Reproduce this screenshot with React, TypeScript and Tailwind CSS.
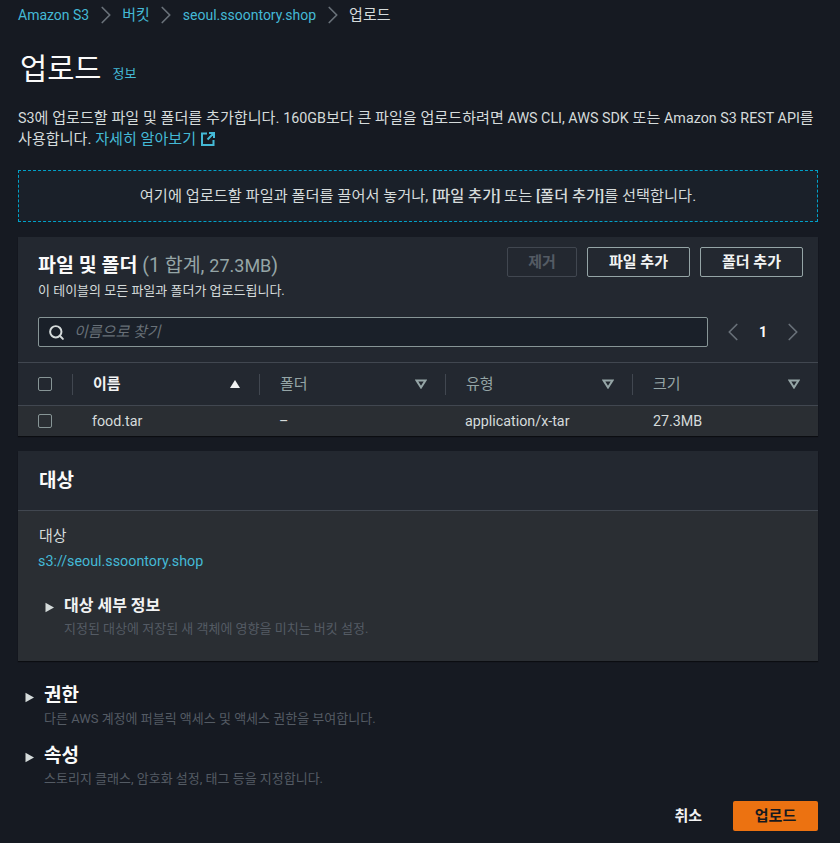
import type { ReactNode } from "react";
import { Search, ChevronLeft, ChevronRight } from "lucide-react";

// hangul runs a bit larger than latin in the shot, so latin runs get their own size
function En({ children }: { children: ReactNode }) {
  return <span className="text-[14.3px]">{children}</span>;
}

function Caret({ active }: { active?: boolean }) {
  if (active) {
    return (
      <svg width="12" height="10" viewBox="0 0 12 10">
        <path d="M6 1 L11 9 L1 9 Z" fill="#f2f3f3" />
      </svg>
    );
  }
  return (
    <svg width="12" height="10" viewBox="0 0 12 10">
      <path d="M1.5 1.5 L10.5 1.5 L6 8.5 Z" fill="none" stroke="#95a5a6" strokeWidth="2" />
    </svg>
  );
}

function Expand() {
  return (
    <svg width="10" height="11" viewBox="0 0 10 11" className="shrink-0 mt-[2px]">
      <path d="M0.5 0.8 L9 5.5 L0.5 10.2 Z" fill="#d5dbdb" />
    </svg>
  );
}

function Crumb() {
  return <ChevronRight size={30} strokeWidth={1.4} className="mx-[1.5px] text-[#687078]" />;
}

function Checkbox() {
  return <div className="w-[14px] h-[14px] rounded-[2px] border border-[#879596]" />;
}

function HeaderCell({ label, width, active }: { label: string; width: string; active?: boolean }) {
  return (
    <div className={`${width} flex items-center h-[21px] border-l border-[#414750] pl-5 pr-[18px]`}>
      <span className={active ? "font-bold text-[#f2f3f3]" : "text-[#95a5a6]"}>{label}</span>
      <span className="ml-auto flex"><Caret active={active} /></span>
    </div>
  );
}

export default function App() {
  const font = { fontFamily: 'Roboto, "Noto Sans CJK KR", sans-serif' };
  return (
    <div style={font} className="w-[840px] h-[843px] overflow-hidden bg-[#161a22] text-[15px] leading-[20px] text-[#d5dbdb] pl-[18px] pr-[22px]">
      <nav className="flex items-center h-[29px] text-[#44b9d6]">
        <span className="text-[14px]">Amazon S3</span>
        <Crumb />
        <span>버킷</span>
        <Crumb />
        <span className="text-[14px]">seoul.ssoontory.shop</span>
        <Crumb />
        <span className="text-[#d5dbdb]">업로드</span>
      </nav>

      <div className="flex items-end mt-[21px] ml-[2px] h-[38px]">
        <h1 className="text-[29.5px] leading-[38px] text-[#fafafa]">업로드</h1>
        <span className="ml-[11px] mb-[6px] text-[13px] leading-[16px] text-[#44b9d6]">정보</span>
      </div>

      <p className="mt-[20px] leading-[21px] whitespace-nowrap text-[15.1px]">
        <En>S3</En>에 업로드할 파일 및 폴더를 추가합니다. <En>160GB</En>보다 큰 파일을 업로드하려면 <En>AWS CLI, AWS SDK</En> 또는 <En>Amazon S3 REST API</En>를
        <br />
        사용합니다. <span className="text-[#44b9d6]">자세히 알아보기</span>
        <svg width="14" height="14" viewBox="0 0 14 14" className="inline-block ml-[5px] align-[-2px]">
          <path d="M6 1.5 H1 V13 H12.5 V8 M8 1 H13 V6 M13 1 L6.5 7.5" fill="none" stroke="#44b9d6" strokeWidth="2" />
        </svg>
      </p>

      <div className="mt-[20px] h-[52px] flex items-center justify-center border border-dashed border-[#00a1c9] bg-[#1a2029] text-[15.25px]">
        <span>
          여기에 업로드할 파일과 폴더를 끌어서 놓거나, <span className="font-medium">[파일 추가]</span> 또는{" "}
          <span className="font-medium">[폴더 추가]</span>를 선택합니다.
        </span>
      </div>

      <section className="mt-[15px] bg-[#232830] shadow-[0_1px_1px_rgba(0,0,0,0.5)]">
        <div className="h-[126px] pl-5 pr-[15px] pt-[10px] border-b border-[#414750]">
          <div className="flex items-start justify-between">
            <div className="pt-[6px]">
              <h2 className="text-[19.5px] leading-[26px] font-bold text-[#fafafa]">
                파일 및 폴더 <span className="font-normal text-[#95a5a6]">(1 합계, <span className="text-[18px]">27.3MB</span>)</span>
              </h2>
              <p className="text-[13px] leading-[16px] mt-[4px]">이 테이블의 모든 파일과 폴더가 업로드됩니다.</p>
            </div>
            <div className="flex gap-[10px]">
              <button className="w-[70px] h-[30px] rounded-[2px] border border-[#414750] text-[#545b64] font-bold">제거</button>
              <button className="w-[103px] h-[30px] rounded-[2px] border border-[#95a5a6] text-[#f2f3f3] font-bold">파일 추가</button>
              <button className="w-[103px] h-[30px] rounded-[2px] border border-[#95a5a6] text-[#f2f3f3] font-bold">폴더 추가</button>
            </div>
          </div>
          <div className="flex items-center mt-[18px]">
            <div className="w-[670px] h-[30px] shrink-0 flex items-center rounded-[2px] border border-[#879596] bg-[#1a2029] pl-[9px]">
              <Search size={17} strokeWidth={2.8} className="text-[#d5dbdb]" />
              <span className="ml-[9px] italic text-[#687078]">이름으로 찾기</span>
            </div>
            <div className="flex items-center ml-[10px] shrink-0">
              <ChevronLeft size={30} strokeWidth={1.4} className="text-[#687078]" />
              <span className="w-[30px] text-center text-[14px] font-bold text-[#fafafa]">1</span>
              <ChevronRight size={30} strokeWidth={1.4} className="text-[#687078]" />
            </div>
          </div>
        </div>

        <div className="h-[43px] flex items-center pl-5 border-b border-[#414750]">
          <div className="w-[34px]"><Checkbox /></div>
          <HeaderCell label="이름" width="w-[187px]" active />
          <HeaderCell label="폴더" width="w-[186px]" />
          <HeaderCell label="유형" width="w-[187px]" />
          <HeaderCell label="크기" width="w-[186px]" />
        </div>

        <div className="h-[30px] flex items-center pl-5 bg-[#2a2e33] text-[14.3px]">
          <div className="w-[54px]"><Checkbox /></div>
          <span className="w-[187px]">food.tar</span>
          <span className="w-[186px]">–</span>
          <span className="w-[188px]">application/x-tar</span>
          <span>27.3MB</span>
        </div>
      </section>

      <section className="mt-[15px] shadow-[0_1px_1px_rgba(0,0,0,0.5)]">
        <div className="h-[60px] flex items-center pl-[21px] pr-5 bg-[#232830] border-b border-[#414750]">
          <h2 className="text-[19px] font-bold text-[#fafafa]">대상</h2>
        </div>
        <div className="h-[150px] bg-[#2a2e33] px-5 pt-[15px]">
          <div className="ml-px">대상</div>
          <div className="mt-[5px] text-[14.3px] text-[#44b9d6]">s3://seoul.ssoontory.shop</div>
          <div className="flex items-center mt-[25px] ml-[7px] gap-[9px]">
            <Expand />
            <span className="text-[16px] font-bold text-[#f2f3f3]">대상 세부 정보</span>
          </div>
          <div className="ml-[26px] mt-[5px] text-[13px] leading-[16px] text-[#545b64]">지정된 대상에 저장된 새 객체에 영향을 미치는 버킷 설정.</div>
        </div>
      </section>

      <div className="mt-[24px] ml-[7px]">
        <div className="flex items-center gap-[9px] h-[22px]">
          <Expand />
          <span className="text-[19px] font-bold text-[#fafafa]">권한</span>
        </div>
        <div className="ml-[19px] mt-[4px] text-[13px] leading-[16px] text-[#545b64]">다른 AWS 계정에 퍼블릭 액세스 및 액세스 권한을 부여합니다.</div>
        <div className="flex items-center gap-[9px] h-[22px] mt-[18px]">
          <Expand />
          <span className="text-[19px] font-bold text-[#fafafa]">속성</span>
        </div>
        <div className="ml-[19px] mt-[4px] text-[13px] leading-[16px] text-[#545b64]">스토리지 클래스, 암호화 설정, 태그 등을 지정합니다.</div>
      </div>

      <div className="flex items-center justify-end gap-[31px] mt-[14px]">
        <span className="font-bold text-[#f2f3f3]">취소</span>
        <button className="w-[85px] h-[30px] rounded-[2px] bg-[#ec7211] text-[#16191f] font-bold">업로드</button>
      </div>
    </div>
  );
}
